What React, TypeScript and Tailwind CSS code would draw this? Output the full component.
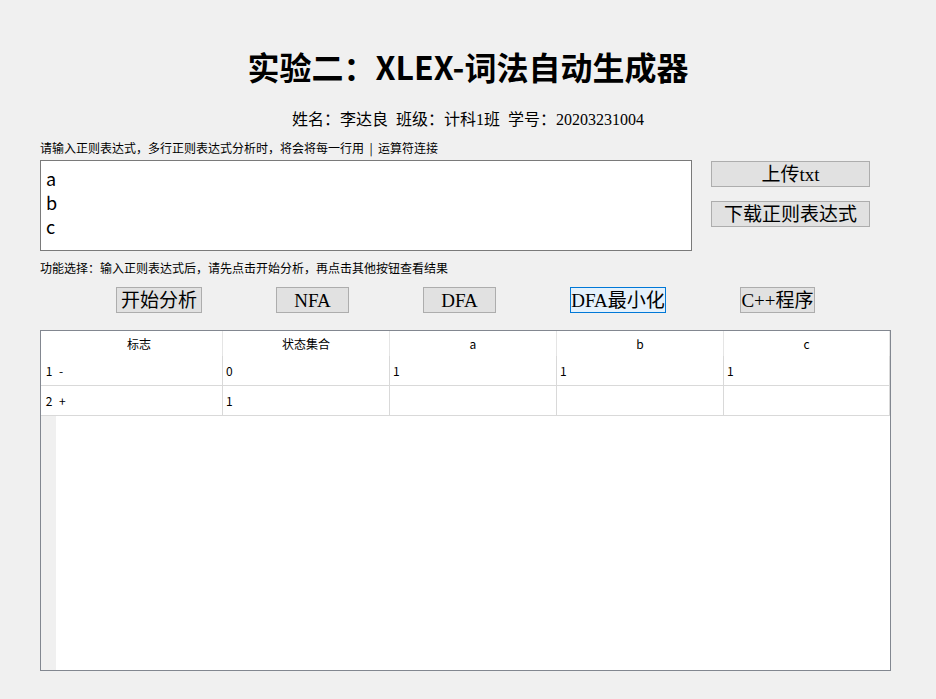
import React from "react";

const sans = { fontFamily: '"Noto Sans CJK SC", "Noto Sans", sans-serif' };
const serif = { fontFamily: '"Liberation Serif", "Noto Sans CJK SC", serif' };

function Btn({ children, w, active }: { children: React.ReactNode; w: string; active?: boolean }) {
  return (
    <div
      className={`${w} h-[26px] flex items-center justify-center border text-[19px] leading-none text-black ${
        active ? "bg-[#e5f1fb] border-[#0078d7]" : "bg-[#e1e1e1] border-[#adadad]"
      }`}
      style={serif}
    >
      {children}
    </div>
  );
}

const cols = ["标志", "状态集合", "a", "b", "c"];
const rows = [
  ["1", "-", "0", "1", "1", "1"],
  ["2", "+", "1", "", "", ""],
];

export default function App() {
  return (
    <div className="w-[936px] h-[699px] bg-[#f0f0f0] overflow-hidden text-black" style={sans}>
      <div className="pt-[47px] text-center text-[32px] font-bold leading-[38px]">实验二：XLEX-词法自动生成器</div>
      <div className="mt-[25px] text-center text-[16px] leading-[20px] whitespace-pre" style={serif}>
        {"姓名：李达良  班级：计科1班  学号：20203231004"}
      </div>
      <div className="mt-[10px] pl-[40px] text-[12px] leading-[16px] whitespace-pre">
        {"请输入正则表达式，多行正则表达式分析时，将会将每一行用  |  运算符连接"}
      </div>
      <div className="mt-[4px] pl-[40px] flex">
        <div className="w-[652px] h-[91px] bg-white border border-[#7a7a7a] pl-[5px] pt-[5px] text-[18px] leading-[24px]">
          <div>a</div>
          <div>b</div>
          <div>c</div>
        </div>
        <div className="ml-[19px] pt-[1px] flex flex-col gap-[14px]">
          <Btn w="w-[159px]">上传txt</Btn>
          <Btn w="w-[159px]">下载正则表达式</Btn>
        </div>
      </div>
      <div className="mt-[9px] pl-[40px] text-[12px] leading-[16px]">
        功能选择：输入正则表达式后，请先点击开始分析，再点击其他按钮查看结果
      </div>
      <div className="mt-[11px] pl-[116px] flex gap-[74px]">
        <Btn w="w-[86px]">开始分析</Btn>
        <Btn w="w-[73px]">NFA</Btn>
        <Btn w="w-[73px]">DFA</Btn>
        <Btn w="w-[96px]" active>DFA最小化</Btn>
        <Btn w="w-[75px]">C++程序</Btn>
      </div>
      <div className="mt-[17px] ml-[40px] w-[851px] h-[341px] border border-[#828790] bg-white flex flex-col text-[12px]">
        <div className="grid grid-cols-[15px_167px_167px_167px_167px_166px] h-[25px]">
          <div className="bg-white" />
          {cols.map((c) => (
            <div key={c} className="border-r border-[#e5e5e5] flex items-center justify-center">
              {c}
            </div>
          ))}
        </div>
        {rows.map((r) => (
          <div key={r[0]} className="grid grid-cols-[15px_167px_167px_167px_167px_166px] h-[30px]">
            {r.map((v, i) => (
              <div
                key={i}
                className={`border-b border-[#d9d9d9] flex items-center ${
                  i === 0 ? "justify-center pl-[1px]" : "border-r pl-[3px]"
                }`}
              >
                {v}
              </div>
            ))}
          </div>
        ))}
        <div className="flex-1 flex">
          <div className="w-[15px] bg-[#f0f0f0]" />
          <div className="flex-1 bg-white" />
        </div>
      </div>
    </div>
  );
}
